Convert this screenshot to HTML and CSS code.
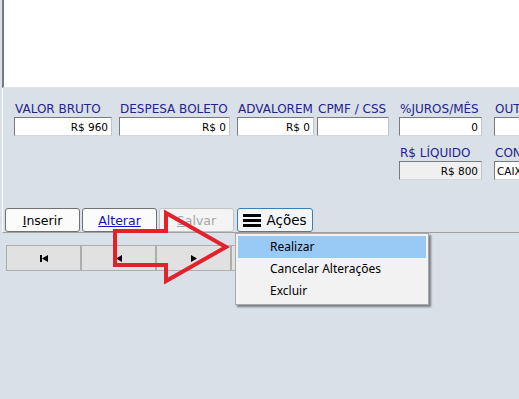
FILE: index.html
```html
<!DOCTYPE html>
<html lang="pt-BR">
<head>
  <meta charset="UTF-8">
  <meta name="viewport" content="width=device-width, initial-scale=1.0">
  <title>Lançamento</title>
  <link rel="stylesheet" href="styles.css">
</head>
<body>
  <div class="grade"></div>

  <div class="painel">
    <div class="campos">
      <div class="campo">
        <label>VALOR BRUTO</label>
        <input class="w98" type="text" value="R$ 960" readonly>
      </div>
      <div class="campo">
        <label>DESPESA BOLETO</label>
        <input class="w111" type="text" value="R$ 0" readonly>
      </div>
      <div class="campo">
        <label>ADVALOREM</label>
        <input class="w77" type="text" value="R$ 0" readonly>
      </div>
      <div class="campo">
        <label>CPMF / CSS</label>
        <input class="w72" type="text" value="" readonly>
      </div>
      <div class="campo">
        <label>%JUROS/MÊS</label>
        <input class="w83" type="text" value="0" readonly>
      </div>
      <div class="campo">
        <label>OUTROS</label>
        <input class="w100" type="text" value="" readonly>
      </div>

      <div class="campo col5">
        <label>R$ LÍQUIDO</label>
        <input class="w83 cinza" type="text" value="R$ 800" readonly>
      </div>
      <div class="campo">
        <label>CONTA</label>
        <input class="w100 esquerda" type="text" value="CAIXA" readonly>
      </div>
    </div>

    <div class="botoes">
      <button class="btn"><u>I</u>nserir</button>
      <button class="btn link">Alterar</button>
      <button class="btn" disabled><u>S</u>alvar</button>
      <button class="btn acoes">
        <svg width="18" height="13" viewBox="0 0 18 13">
          <rect x="0" y="0" width="18" height="3" fill="#000"/>
          <rect x="0" y="5" width="18" height="3" fill="#000"/>
          <rect x="0" y="10" width="18" height="3" fill="#000"/>
        </svg>
        <span>Ações</span>
      </button>
    </div>
  </div>

  <div class="navegacao">
    <button class="nav">
      <svg width="8" height="7" viewBox="0 0 8 7"><rect x="0" y="0" width="2" height="7"/><path d="M8 0 L2 3.5 L8 7 Z"/></svg>
    </button>
    <button class="nav">
      <svg width="6" height="7" viewBox="0 0 6 7"><path d="M6 0 L0 3.5 L6 7 Z"/></svg>
    </button>
    <button class="nav">
      <svg width="6" height="7" viewBox="0 0 6 7"><path d="M0 0 L6 3.5 L0 7 Z"/></svg>
    </button>
    <button class="nav">
      <svg width="8" height="7" viewBox="0 0 8 7"><path d="M0 0 L6 3.5 L0 7 Z"/><rect x="6" y="0" width="2" height="7"/></svg>
    </button>
  </div>

  <!-- seta de destaque -->
  <svg class="seta" width="130" height="80" viewBox="105 207 130 80">
    <path d="M115 231 L166 231 L166 213 L226 247 L166 281 L166 265 L115 265 Z"
          fill="none" stroke="#e3212b" stroke-width="4" stroke-linejoin="miter"/>
  </svg>

  <!-- menu de ações aberto -->
  <ul class="menu">
    <li class="ativo">Realizar</li>
    <li>Cancelar Alterações</li>
    <li>Excluir</li>
  </ul>
</body>
</html>
```

FILE: styles.css
```css
* {
  box-sizing: border-box;
}

body {
  margin: 0;
  width: 519px;
  height: 399px;
  overflow: hidden;
  position: relative;
  background: #dae0e7;
  font-family: "DejaVu Sans", sans-serif;
}

.grade {
  height: 88px;
  margin-left: 2px;
  background: #fff;
  border-left: 2px solid #7b7b7b;
  border-bottom: 1px solid #e4e4e4;
}

.painel {
  height: 145px;
  width: 700px;
  margin-left: 2px;
  padding-top: 14px;
  border-left: 1px solid #fff;
  border-bottom: 1px solid #a0a0a0;
  display: flex;
  flex-direction: column;
}

.campos {
  display: grid;
  grid-template-columns: 105px 118px 80px 82px 95px 100px;
  row-gap: 10px;
  padding-left: 11px;
}

.col5 {
  grid-column: 5;
}

.campo label {
  display: block;
  height: 15px;
  padding-left: 1px;
  font-size: 12px;
  line-height: 14px;
  color: #23238c;
  white-space: nowrap;
}

.campo input {
  display: block;
  height: 19px;
  padding: 0 3px;
  border: 1px solid;
  border-color: #7a7a7a #c4c4c4 #d6d6d6 #7a7a7a;
  background: #fff;
  font-family: "DejaVu Sans", sans-serif;
  font-size: 10.5px;
  color: #000;
  text-align: right;
  outline: none;
}

.campo input.cinza {
  background: #f0f0f0;
}

.campo input.esquerda {
  text-align: left;
  padding-left: 2px;
}

.w98 { width: 98px; }
.w111 { width: 111px; }
.w77 { width: 77px; }
.w72 { width: 72px; }
.w83 { width: 83px; }
.w100 { width: 100px; }

.botoes {
  margin-top: auto;
  padding-left: 2px;
  display: flex;
  gap: 2px;
}

.btn {
  width: 75px;
  height: 24px;
  padding: 0;
  border: 1px solid #707070;
  border-radius: 3px;
  background: #fbfbfb;
  font-family: "DejaVu Sans", sans-serif;
  font-size: 12.5px;
  color: #000;
  text-align: center;
}

.btn.link {
  color: #1010c8;
  text-decoration: underline;
}

.btn:disabled {
  border-color: #c2c2c2;
  color: #a6a6a6;
  background: #f4f4f4;
}

.btn.acoes {
  width: 76px;
  margin-left: 1px;
  border-color: #3c7fb1;
  background: #f3f6f9;
  font-size: 13.5px;
  display: flex;
  align-items: center;
  justify-content: center;
  gap: 5px;
}

.navegacao {
  display: flex;
  margin-top: 12px;
  padding-left: 6px;
}

.nav {
  width: 75px;
  height: 26px;
  padding: 0;
  border: 1px solid #adadad;
  background: #e1e1e1;
  display: flex;
  align-items: center;
  justify-content: center;
}

.nav svg {
  fill: #000;
}

.seta {
  position: absolute;
  left: 105px;
  top: 207px;
}

.menu {
  position: absolute;
  left: 235px;
  top: 233px;
  width: 194px;
  height: 72px;
  margin: 0;
  padding: 2px;
  list-style: none;
  background: #f2f2f2;
  border: 1px solid #a9a9a9;
  box-shadow: 2px 2px 2px rgba(0, 0, 0, 0.45);
  font-family: "Noto Sans", sans-serif;
  font-size: 12px;
  color: #000;
}

.menu li {
  height: 22px;
  line-height: 21px;
  padding-left: 32px;
}

.menu li.ativo {
  background: #99c9f5;
}
```
